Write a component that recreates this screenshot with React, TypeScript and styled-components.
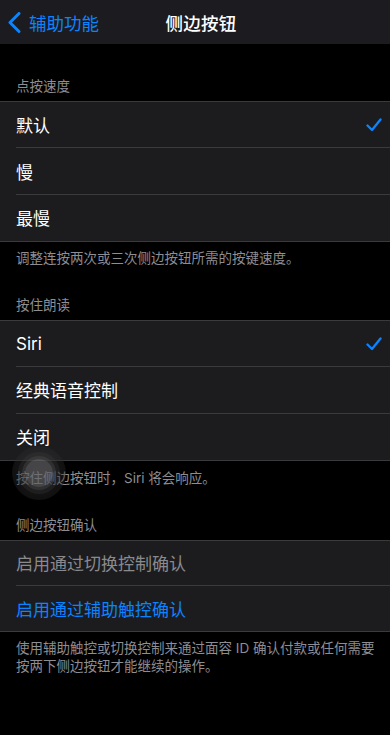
import React from "react";
import styled, { createGlobalStyle } from "styled-components";

const Global = createGlobalStyle`
  html, body { margin: 0; padding: 0; background: #000; }
  body { font-family: Inter, "Noto Sans CJK SC", "Noto Sans", sans-serif; -webkit-font-smoothing: antialiased; }
  * { box-sizing: border-box; }
`;

const Page = styled.div`
  width: 390px;
  min-height: 735px;
  background: #000;
  position: relative;
  overflow: hidden;
`;

const NavBar = styled.div`
  height: 44px;
  background: #1c1b1f;
  display: grid;
  grid-template-columns: 1fr auto 1fr;
  align-items: center;
`;

const Back = styled.div`
  display: flex;
  align-items: center;
  gap: 8px;
  padding-left: 8px;
  color: #0a84ff;
  font-size: 17.5px;
`;

const Title = styled.div`
  color: #fff;
  font-size: 17.5px;
  font-weight: 500;
  letter-spacing: 0.3px;
  margin-left: 12px;
`;

const Section = styled.section<{ $first?: boolean }>`
  display: flex;
  flex-direction: column;
  padding-top: ${(p) => (p.$first ? "33px" : "29px")};
`;

const Header = styled.div`
  padding: 0 16px 6px;
  font-size: 13.5px;
  line-height: 18px;
  color: #8d8d93;
`;

const Group = styled.div`
  background: #1c1c1e;
  border-top: 0.5px solid #3a3a3c;
  border-bottom: 0.5px solid #3a3a3c;
`;

const Row = styled.div<{ $h: number; $last?: boolean }>`
  height: ${(p) => p.$h}px;
  margin-left: 16px;
  padding-right: 8px;
  display: flex;
  align-items: center;
  justify-content: space-between;
  border-bottom: ${(p) => (p.$last ? "none" : "0.5px solid #3a3a3c")};
`;

const Label = styled.span<{ $tone?: "normal" | "muted" | "link" }>`
  font-size: 17px;
  color: ${(p) => (p.$tone === "muted" ? "#8a8a8e" : p.$tone === "link" ? "#0a84ff" : "#fff")};
`;

const Footer = styled.div<{ $top?: number }>`
  padding: ${(p) => p.$top ?? 7}px 12px 0 16px;
  font-size: 13.5px;
  line-height: 18px;
  color: #8d8d93;
`;

const Touch = styled.div`
  position: absolute;
  left: 12px;
  top: 446px;
  width: 54px;
  height: 54px;
  border-radius: 50%;
  background: radial-gradient(circle, rgba(70,70,72,0.35) 0%, rgba(45,45,47,0.4) 60%, rgba(30,30,32,0.35) 100%);
  display: flex;
  align-items: center;
  justify-content: center;
`;

const TouchInner = styled.div`
  width: 28px;
  height: 28px;
  border-radius: 50%;
  background: rgba(110,110,113,0.55);
  box-shadow: 0 0 0 3px rgba(80,80,82,0.35), 0 0 0 7px rgba(60,60,62,0.28);
`;

const Check = () => (
  <svg width="16" height="14" viewBox="0 0 16 14">
    <path d="M1.5 7.5 L6 12 L14.5 1.5" fill="none" stroke="#0a84ff" strokeWidth="2.3" strokeLinecap="round" strokeLinejoin="round" />
  </svg>
);

const Chevron = () => (
  <svg width="13" height="21" viewBox="0 0 13 21">
    <path d="M11 1.5 L2 10.5 L11 19.5" fill="none" stroke="#0a84ff" strokeWidth="3" strokeLinecap="round" strokeLinejoin="round" />
  </svg>
);

type Item = { label: string; checked?: boolean; tone?: "normal" | "muted" | "link" };

const List = ({ items, h }: { items: Item[]; h: number }) => (
  <Group>
    {items.map((it, i) => (
      <Row key={it.label} $h={h} $last={i === items.length - 1}>
        <Label $tone={it.tone}>{it.label}</Label>
        {it.checked && <Check />}
      </Row>
    ))}
  </Group>
);

export default function App() {
  return (
    <Page>
      <Global />
      <NavBar>
        <Back>
          <Chevron />
          <span>辅助功能</span>
        </Back>
        <Title>侧边按钮</Title>
        <div />
      </NavBar>

      <Section $first>
        <Header>点按速度</Header>
        <List h={46.4} items={[{ label: "默认", checked: true }, { label: "慢" }, { label: "最慢" }]} />
        <Footer>调整连按两次或三次侧边按钮所需的按键速度。</Footer>
      </Section>

      <Section>
        <Header>按住朗读</Header>
        <List h={46.2} items={[{ label: "Siri", checked: true }, { label: "经典语音控制" }, { label: "关闭" }]} />
        <Footer $top={8}>按住侧边按钮时，Siri 将会响应。</Footer>
      </Section>

      <Section>
        <Header>侧边按钮确认</Header>
        <List
          h={45}
          items={[
            { label: "启用通过切换控制确认", tone: "muted" },
            { label: "启用通过辅助触控确认", tone: "link" },
          ]}
        />
        <Footer>
          使用辅助触控或切换控制来通过面容 ID 确认付款或任何需要
          <br />
          按两下侧边按钮才能继续的操作。
        </Footer>
      </Section>

      <Touch>
        <TouchInner />
      </Touch>
    </Page>
  );
}
